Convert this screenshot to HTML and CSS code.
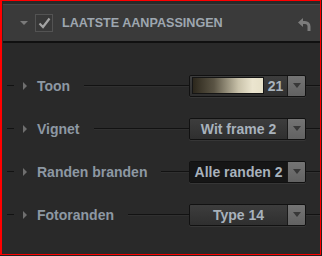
FILE: index.html
```html
<!DOCTYPE html>
<html lang="nl">
<head>
  <meta charset="UTF-8" />
  <title>Laatste aanpassingen</title>
  <link rel="stylesheet" href="styles.css">
</head>
<body>

  <div class="panel">
    <div class="header">
      <span class="caret-down"></span>
      <span class="checkbox">
        <svg width="13" height="12" viewBox="0 0 13 12"><path d="M1.5 6.5 L5 10 L11.5 1.5" fill="none" stroke="#a3a3a3" stroke-width="2.2"/></svg>
      </span>
      <span class="title">LAATSTE AANPASSINGEN</span>
      <svg class="undo" width="13" height="13" viewBox="0 0 13 13">
        <path d="M0 4.5 L5 0 L5 9 Z" fill="#7c7c7c"/>
        <path d="M4 4.5 H7 A4 4 0 0 1 11 8.5 V13" fill="none" stroke="#7c7c7c" stroke-width="3"/>
      </svg>
    </div>

    <div class="rows">
      <div class="row">
        <span class="dash"></span>
        <span class="caret-right"></span>
        <span class="label">Toon</span>
        <span class="line"></span>
        <div class="select">
          <div class="value tone">
            <span class="swatch"></span>
            <span class="num">21</span>
          </div>
          <span class="btn"></span>
        </div>
        <span class="line end"></span>
      </div>

      <div class="row">
        <span class="dash"></span>
        <span class="caret-right"></span>
        <span class="label">Vignet</span>
        <span class="line"></span>
        <div class="select">
          <div class="value">Wit frame 2</div>
          <span class="btn"></span>
        </div>
        <span class="line end"></span>
      </div>

      <div class="row">
        <span class="dash"></span>
        <span class="caret-right"></span>
        <span class="label">Randen branden</span>
        <span class="line"></span>
        <div class="select active">
          <div class="value">Alle randen 2</div>
          <span class="btn"></span>
        </div>
        <span class="line end"></span>
      </div>

      <div class="row">
        <span class="dash"></span>
        <span class="caret-right"></span>
        <span class="label">Fotoranden</span>
        <span class="line"></span>
        <div class="select">
          <div class="value">Type 14</div>
          <span class="btn"></span>
        </div>
        <span class="line end"></span>
      </div>
    </div>
  </div>

</body>
</html>
```

FILE: styles.css
```css
html, body {
  margin: 0;
  height: 100%;
}

body {
  background-color: #222;
  font-family: 'Liberation Sans', Arial, sans-serif;
  font-weight: bold;
}

.panel {
  box-sizing: border-box;
  width: 321px;
  height: 255px;
  border: 1px solid #ff0000;
  border-left-width: 2px;
  padding: 3px 0 0 1px;
  background-color: #292929;
  display: flex;
  flex-direction: column;
}

.header {
  height: 36px;
  flex-shrink: 0;
  background-color: #3a3a3a;
  border-top: 1px solid #474747;
  border-bottom: 2px solid #101010;
  display: flex;
  align-items: center;
  box-sizing: border-box;
  height: 39px;
}

.caret-down {
  margin-left: 17px;
  width: 0;
  height: 0;
  border-left: 4px solid transparent;
  border-right: 4px solid transparent;
  border-top: 4px solid #7a7a7a;
}

.checkbox {
  margin-left: 7px;
  width: 16px;
  height: 16px;
  border: 1px solid #535353;
  background-color: #383838;
  display: flex;
  align-items: center;
  justify-content: center;
}

.title {
  margin-left: 9px;
  font-size: 12.6px;
  color: #9ea7b0;
  flex: 1;
}

.undo {
  margin-right: 9px;
  margin-top: 2px;
}

.rows {
  padding-top: 21px;
}

.row {
  height: 43px;
  display: flex;
  align-items: center;
}

.dash {
  margin-left: 4px;
  width: 7px;
  height: 1px;
  background-color: #121212;
}

.caret-right {
  margin-left: 9px;
  width: 0;
  height: 0;
  border-top: 4.5px solid transparent;
  border-bottom: 4.5px solid transparent;
  border-left: 4px solid #6f6f6f;
}

.label {
  margin-left: 10px;
  font-size: 14px;
  color: #8d98a3;
}

.line {
  flex: 1;
  margin-left: 14px;
  height: 1px;
  background-color: #121212;
  border-bottom: 1px solid #303030;
}

.line.end {
  flex: 0 0 14px;
  margin-left: 0;
}

.select {
  width: 117px;
  height: 22px;
  box-sizing: border-box;
  border: 1px solid #111;
  border-radius: 2px;
  display: flex;
  overflow: hidden;
  box-shadow: 0 1px 0 #363636;
}

.value {
  flex: 1;
  background: linear-gradient(#3d3d3d, #2f2f2f);
  color: #a8b2bc;
  font-size: 14px;
  text-align: center;
  line-height: 20px;
}

.select.active .value {
  background: #161616;
}

.value.tone {
  display: flex;
  align-items: center;
}

.swatch {
  margin-left: 2px;
  width: 72px;
  height: 17px;
  box-sizing: border-box;
  border: 1px solid #151515;
  background: linear-gradient(to right, #2c271c, #5a5444 30%, #c9c2aa 65%, #ebe5cf 85%, #e6e0c8);
}

.num {
  flex: 1;
  text-align: center;
  font-size: 14px;
}

.btn {
  width: 17px;
  background: linear-gradient(#747474, #626262);
  border-left: 1px solid #1a1a1a;
  display: flex;
  align-items: center;
  justify-content: center;
}

.btn::after {
  content: "";
  width: 0;
  height: 0;
  border-left: 4px solid transparent;
  border-right: 4px solid transparent;
  border-top: 5px solid #383838;
}
```
